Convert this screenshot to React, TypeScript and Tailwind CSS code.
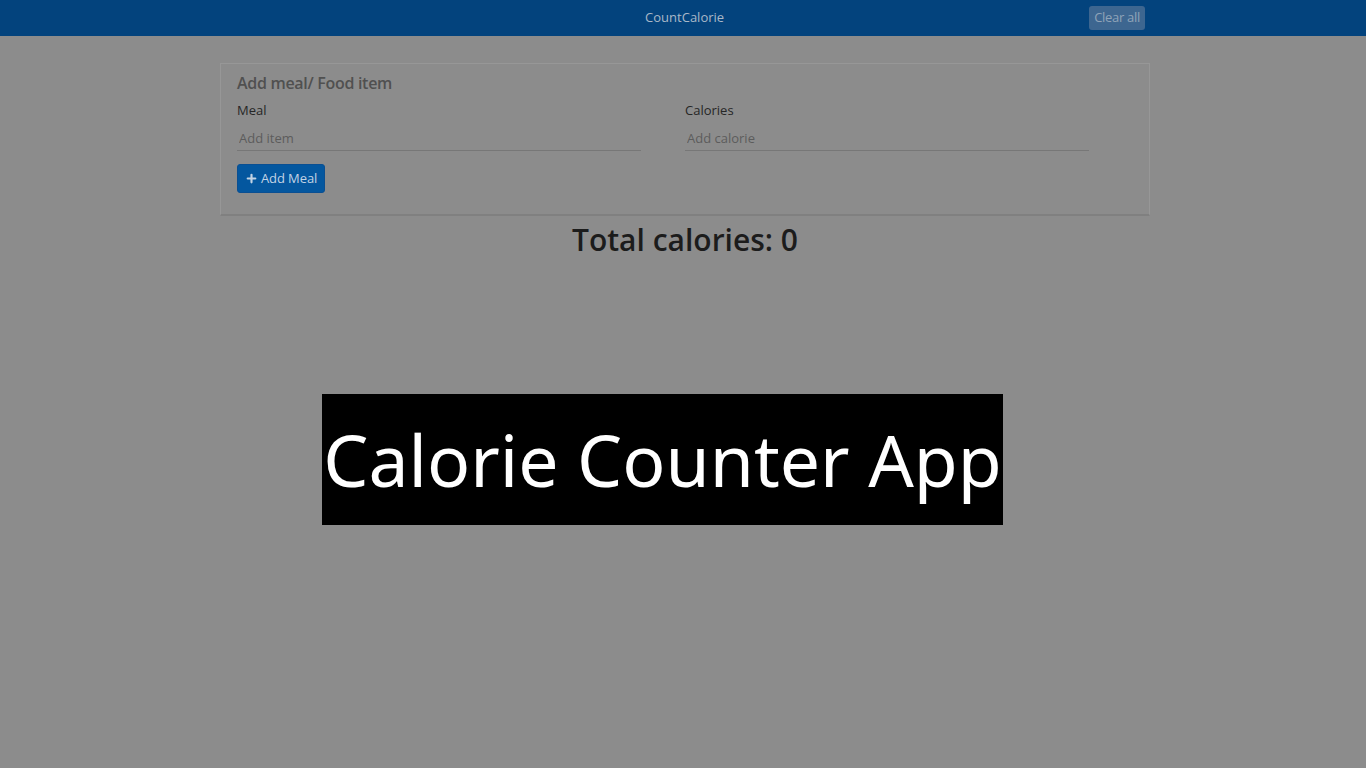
import { Plus } from "lucide-react";

export default function App() {
  return (
    <div className="relative min-h-screen bg-[#8c8c8c] font-['Open_Sans','Noto_Sans',sans-serif]">
      <nav className="flex h-9 items-center bg-[#03437d]">
        <div className="ml-[220px] flex w-[930px] items-center justify-between">
          <span className="w-[60px]" />
          <span className="text-[13px] text-[#a9b8c8]">CountCalorie</span>
          <button className="mr-[5px] rounded-[3px] bg-[#3d6690] px-[5px] py-[2px] text-[13px] tracking-[-0.3px] text-[#8fa3b8]">
            Clear all
          </button>
        </div>
      </nav>

      <main className="ml-[220px] w-[930px] pt-[27px]">
        <div className="border border-[#979797] border-b-2 border-b-[#808080] px-[16px] pb-[21px] pt-[7px]">
          <h2 className="text-[16px] font-semibold tracking-[-0.3px] text-[#505050]">Add meal/ Food item</h2>
          <div className="mt-[6px] flex gap-[44px]">
            <label className="flex w-[404px] flex-col">
              <span className="text-[13px] text-[#262626]">Meal</span>
              <input
                placeholder="Add item"
                className="mt-[8px] border-b border-[#777] bg-transparent px-[2px] pb-[2px] text-[13px] outline-none placeholder:text-[#5c5c5c]"
              />
            </label>
            <label className="flex w-[404px] flex-col">
              <span className="text-[13px] text-[#262626]">Calories</span>
              <input
                placeholder="Add calorie"
                className="mt-[8px] border-b border-[#777] bg-transparent px-[2px] pb-[2px] text-[13px] outline-none placeholder:text-[#5c5c5c]"
              />
            </label>
          </div>
          <button className="mt-[13px] inline-flex h-[29px] items-center gap-[3px] rounded-[3px] border border-[#0a4f92] bg-[#04579f] px-[7px] text-[13px] tracking-[-0.1px] text-[#c2d3e4]">
            <Plus size={13} strokeWidth={4} /> Add Meal
          </button>
        </div>
        <h1 className="mt-[1px] text-center text-[30px] font-semibold text-[#1c1c1c]">Total calories: 0</h1>
      </main>

      <div className="absolute left-[322px] top-[394px] flex h-[131px] w-[681px] items-center justify-center whitespace-nowrap bg-black font-['Noto_Sans',sans-serif] text-[71.5px] text-white">
        Calorie Counter App
      </div>
    </div>
  );
}
